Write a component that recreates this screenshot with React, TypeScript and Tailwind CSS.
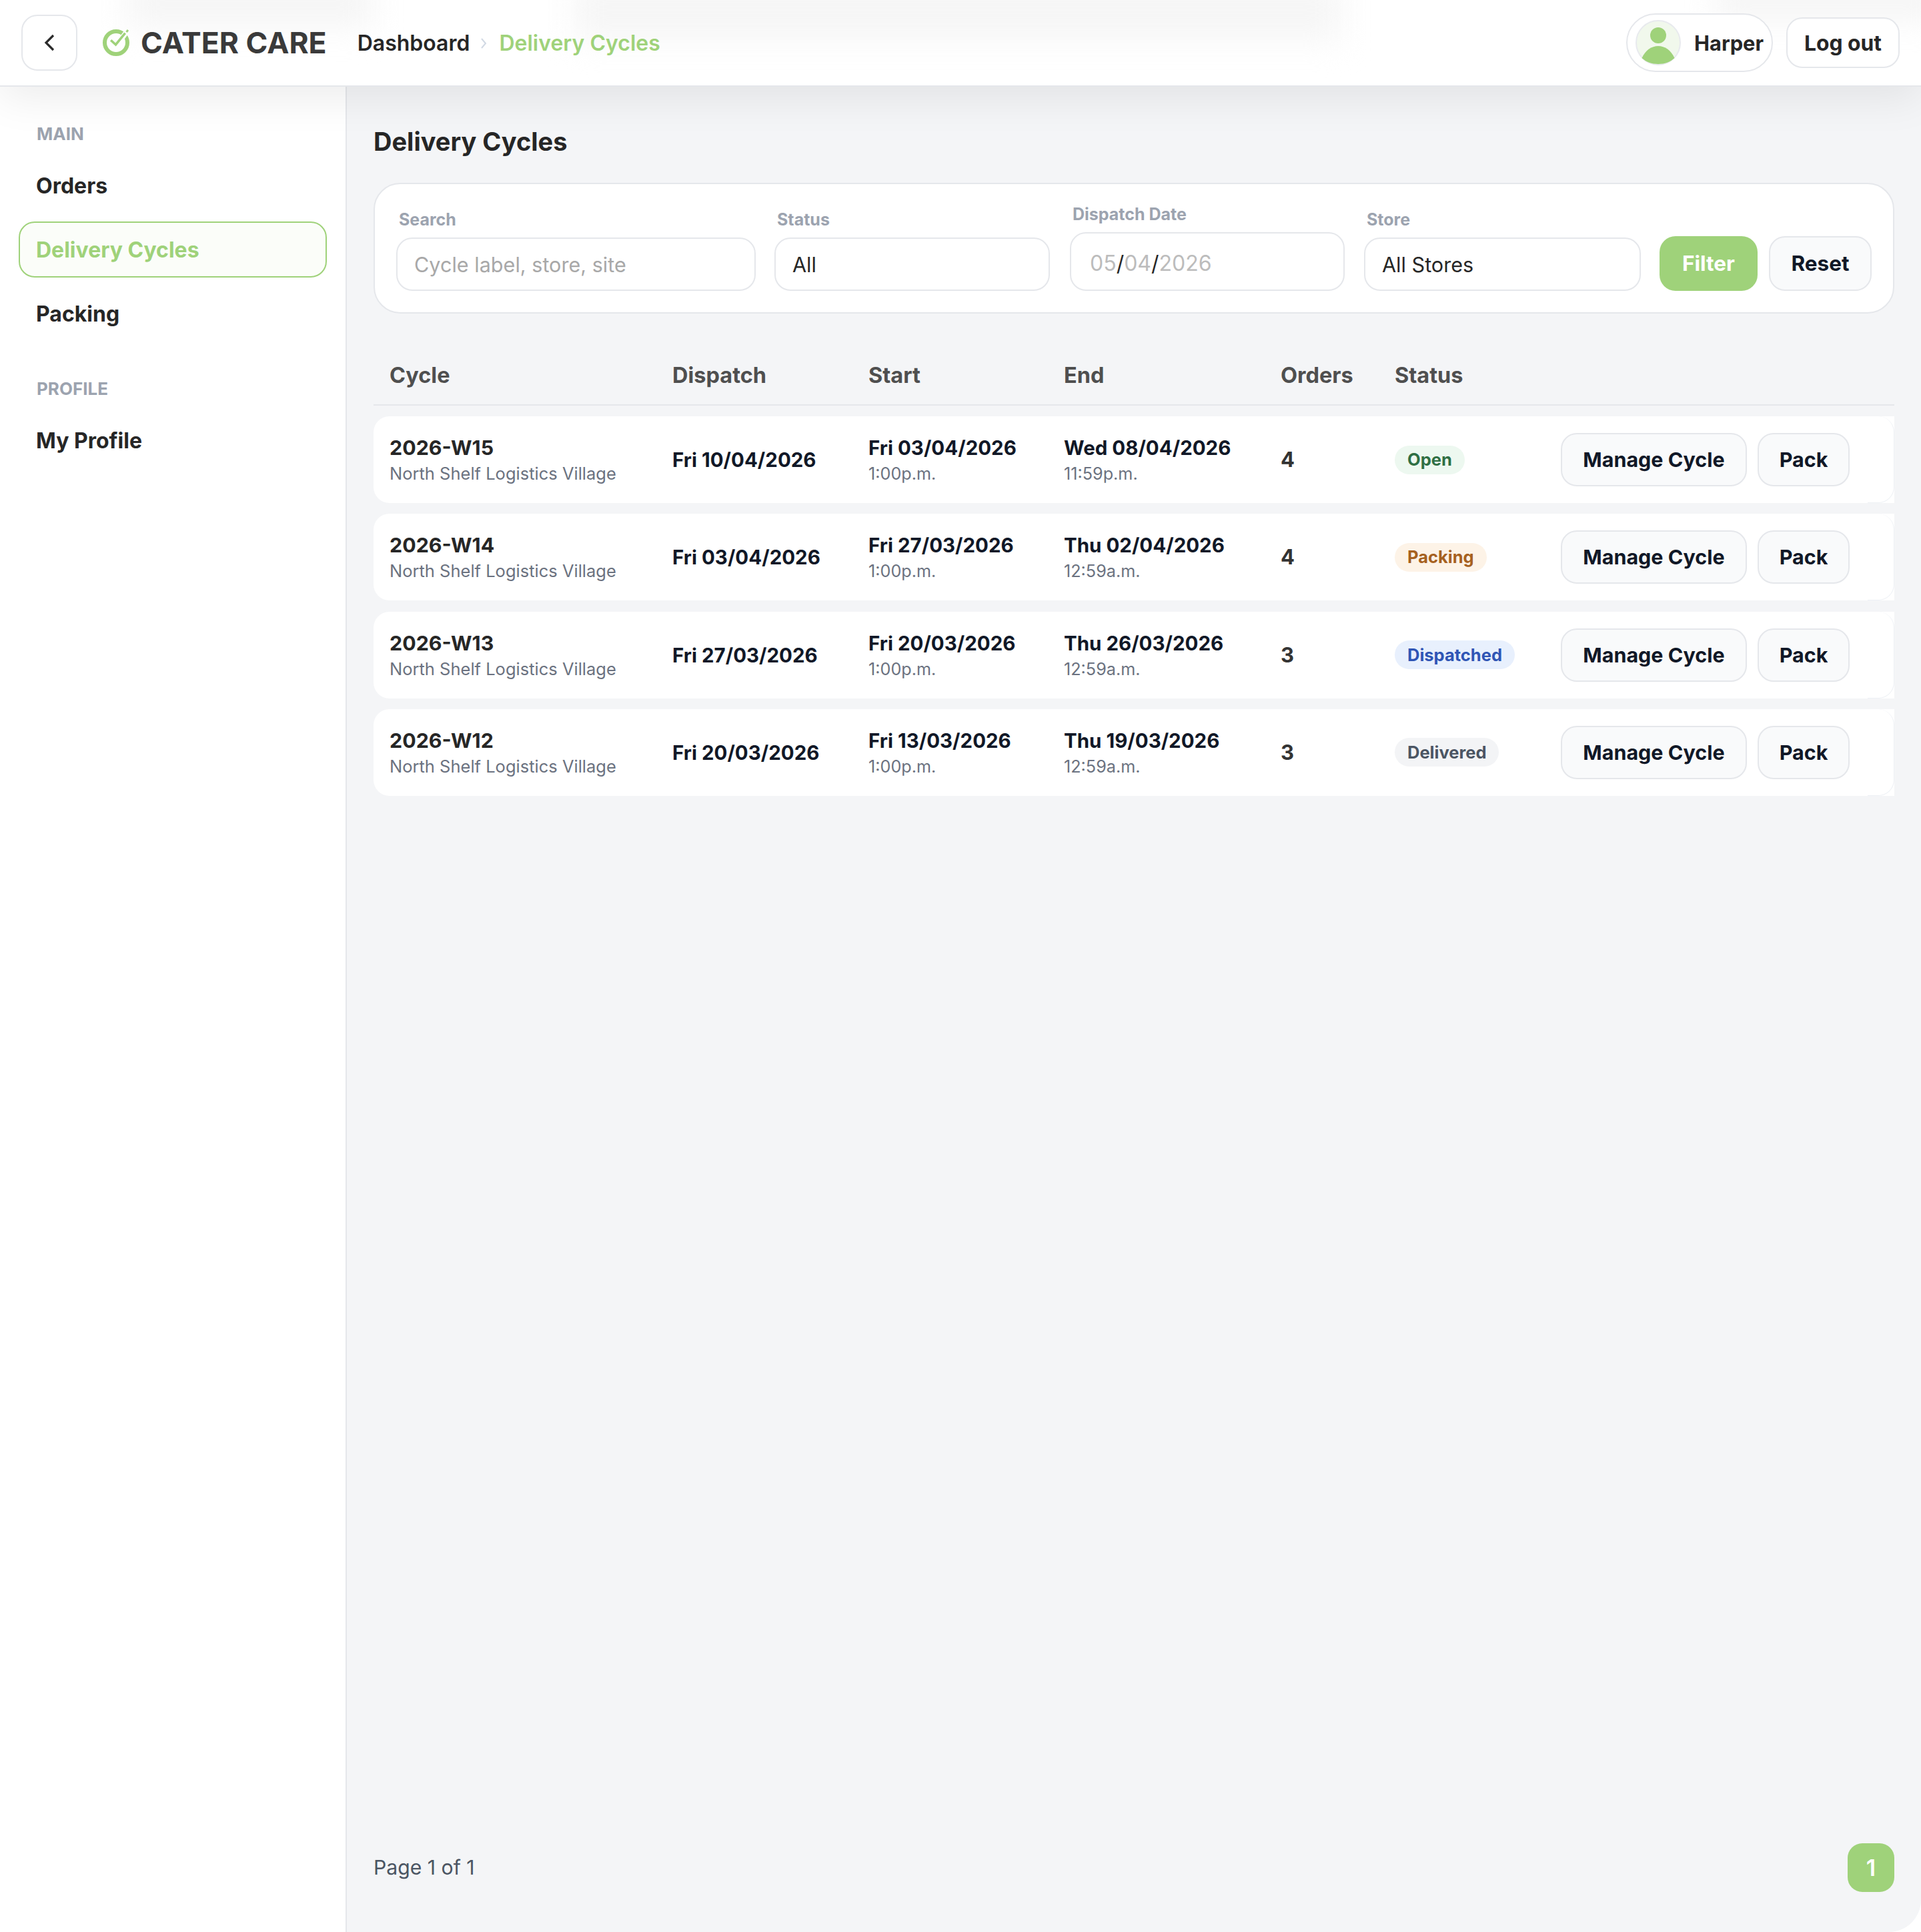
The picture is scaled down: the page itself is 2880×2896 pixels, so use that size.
import React from "react";

const COLS = "grid grid-cols-[424px_294px_293px_325px_171px_249px_1fr] pl-[24px]";

const rows = [
  { id: "2026-W15", dispatch: "Fri 10/04/2026", start: "Fri 03/04/2026", startT: "1:00p.m.", end: "Wed 08/04/2026", endT: "11:59p.m.", orders: "4", status: "Open", badge: "bg-[#edf8f0] text-[#2f6f44]" },
  { id: "2026-W14", dispatch: "Fri 03/04/2026", start: "Fri 27/03/2026", startT: "1:00p.m.", end: "Thu 02/04/2026", endT: "12:59a.m.", orders: "4", status: "Packing", badge: "bg-[#fdf3e7] text-[#a6611f]" },
  { id: "2026-W13", dispatch: "Fri 27/03/2026", start: "Fri 20/03/2026", startT: "1:00p.m.", end: "Thu 26/03/2026", endT: "12:59a.m.", orders: "3", status: "Dispatched", badge: "bg-[#e8f0fd] text-[#2f55b5]" },
  { id: "2026-W12", dispatch: "Fri 20/03/2026", start: "Fri 13/03/2026", startT: "1:00p.m.", end: "Thu 19/03/2026", endT: "12:59a.m.", orders: "3", status: "Delivered", badge: "bg-[#f3f4f6] text-[#4b5563]" },
];

function Logo() {
  return (
    <svg width="48" height="48" viewBox="0 0 48 48" fill="none" className="shrink-0">
      <circle cx="24" cy="24" r="17" stroke="#9fd27a" strokeWidth="6" />
      <path d="M30 21 L41 6" stroke="#ffffff" strokeWidth="8" />
      <path d="M17.5 21.5 L23.5 27 L36.5 11" stroke="#9fd27a" strokeWidth="3.6" strokeLinecap="square" />
      <path d="M39.5 8 L42 5" stroke="#9fd27a" strokeWidth="3" />
    </svg>
  );
}

function Avatar() {
  return (
    <svg width="68" height="68" viewBox="0 0 68 68" className="shrink-0">
      <circle cx="34" cy="34" r="33" fill="#f1f8ec" stroke="#e8eaee" strokeWidth="2" />
      <circle cx="34" cy="23" r="12" fill="#9fd27a" />
      <path d="M9.5 57 C15 45 24 39 34 39 C44 39 53 45 58.5 57 C52 63 44 66 34 66 C24 66 16 63 9.5 57 Z" fill="#9fd27a" />
    </svg>
  );
}

function Field({ label, width, children }: { label: string; width: string; children: React.ReactNode }) {
  return (
    <div className={`flex flex-col ${width}`}>
      <div className="mb-[11px] pl-[4px] text-[25px] font-bold leading-[32px] text-[#9ca3af]">{label}</div>
      {children}
    </div>
  );
}

const inputCls = "h-[80px] flex items-center rounded-[24px] border-2 border-[#e5e7eb] bg-white pl-[25px] pt-[2px] text-[30.6px]";

export default function App() {
  return (
    <div className="relative flex h-[2896px] w-full flex-col bg-white font-[Inter,sans-serif] text-[#262626]">
      <header className="relative z-10 flex h-[130px] shrink-0 items-center justify-between overflow-hidden border-b-2 border-[#e5e7eb] bg-white pl-[32px] pr-[32px] shadow-[0_16px_64px_rgba(0,0,0,0.08)]">
        <div className="absolute left-[190px] top-[-30px] h-[70px] w-[370px] bg-[#f5f5f5] blur-[24px]" />
        <div className="absolute left-[860px] top-[-30px] h-[90px] w-[1150px] bg-[#f6f6f6] blur-[24px]" />
        <div className="absolute left-[2570px] top-[-30px] h-[60px] w-[340px] bg-[#f5f5f5] blur-[24px]" />
        <div className="relative flex items-center">
          <button className="flex h-[84px] w-[84px] items-center justify-center rounded-[24px] border-2 border-[#e5e7eb] bg-white">
            <svg width="18" height="26" viewBox="0 0 18 26" fill="none">
              <path d="M15 2 L4 13 L15 24" stroke="#2b2b2b" strokeWidth="3.2" />
            </svg>
          </button>
          <div className="ml-[34px] flex items-center">
            <Logo />
            <span className="ml-[13px] text-[44.5px] font-bold leading-none text-[#3a3a3a]">CATER CARE</span>
          </div>
          <nav className="ml-[46px] flex items-center pt-[2px] text-[32px] font-semibold">
            <span className="text-[#262626]">Dashboard</span>
            <svg width="12" height="18" viewBox="0 0 12 18" fill="none" className="ml-[15px] mr-[17px]">
              <path d="M3 2 L9 9 L3 16" stroke="#d1d9e4" strokeWidth="2" />
            </svg>
            <span className="text-[#9fd27a]">Delivery Cycles</span>
          </nav>
        </div>
        <div className="relative flex items-center">
          <div className="flex h-[88px] w-[220px] items-center rounded-[44px] border-2 border-[#e5e7eb] bg-white pl-[12px]">
            <Avatar />
            <span className="ml-[20px] pt-[2px] text-[30.8px] font-bold">Harper</span>
          </div>
          <button className="ml-[20px] h-[76px] w-[170px] rounded-[24px] border-2 border-[#e5e7eb] bg-white pt-[2px] text-[31.8px] font-bold">Log out</button>
        </div>
      </header>

      <div className="flex min-h-0 flex-1">
        <aside className="w-[520px] shrink-0 border-r-2 border-[#e5e7eb] bg-white pl-[28px] pr-[28px]">
          <div className="mt-[55px] pl-[27px] text-[26px] font-bold leading-[32px] text-[#9ca3af]">MAIN</div>
          <div className="mt-[19px] flex flex-col gap-[12px]">
            <div className="flex h-[84px] items-center rounded-[24px] pl-[26px] pt-[2px] text-[32px] font-bold">Orders</div>
            <div className="flex h-[84px] items-center rounded-[24px] border-2 border-[#9fd27a] bg-[#fbfdf9] pl-[24px] pt-[2px] text-[32px] font-bold text-[#9fd27a]">Delivery Cycles</div>
            <div className="flex h-[84px] items-center rounded-[24px] pl-[26px] pt-[2px] text-[32px] font-bold">Packing</div>
          </div>
          <div className="mt-[55px] pl-[27px] text-[26px] font-bold leading-[32px] text-[#9ca3af]">PROFILE</div>
          <div className="mt-[19px] flex h-[84px] items-center rounded-[24px] pl-[26px] pt-[2px] text-[32px] font-bold">My Profile</div>
        </aside>

        <main className="flex min-w-0 flex-1 flex-col rounded-br-[48px] bg-[#f4f5f7] pl-[40px] pr-[40px] pb-[60px] pt-[58px]">
          <h1 className="text-[38px] font-bold leading-[48px] text-[#262626]">Delivery Cycles</h1>

          <section className="mt-[38px] flex h-[196px] items-end rounded-[40px] border-2 border-[#e5e7eb] bg-white pb-[32px] pl-[32px]">
            <Field label="Search" width="w-[539px]">
              <div className={`${inputCls} text-[#a8a8a8]`}>Cycle label, store, site</div>
            </Field>
            <div className="w-[28px]" />
            <Field label="Status" width="w-[413px]">
              <div className={`${inputCls} text-[#262626]`}>All</div>
            </Field>
            <div className="w-[30px]" />
            <Field label="Dispatch Date" width="w-[412px]">
              <div className="flex h-[88px] items-center rounded-[24px] border-2 border-[#e5e7eb] bg-white pl-[28px] pt-[5px] text-[32px] text-[#bcbcbc]">
                05<span className="text-[#262626]">/</span>04<span className="text-[#262626]">/</span>2026
              </div>
            </Field>
            <div className="w-[29px]" />
            <Field label="Store" width="w-[415px]">
              <div className={`${inputCls} text-[#262626]`}>All Stores</div>
            </Field>
            <button className="ml-[28px] h-[82px] w-[147px] rounded-[24px] bg-[#9fd27a] text-[31.5px] font-bold text-white">Filter</button>
            <button className="ml-[17px] h-[82px] w-[154px] rounded-[24px] border-2 border-[#e5e7eb] bg-[#f9fafb] text-[31.5px] font-bold text-[#111827]">Reset</button>
          </section>

          <div className={`${COLS} mt-[24px] h-[114px] items-end border-b-2 border-[#e5e7eb] pb-[23px] text-[32.5px] font-bold leading-[40px] text-[#4f4f4f]`}>
            <div>Cycle</div>
            <div>Dispatch</div>
            <div>Start</div>
            <div>End</div>
            <div>Orders</div>
            <div>Status</div>
            <div />
          </div>

          <div className="mt-[16px] flex flex-col gap-[16.33px]">
            {rows.map((r) => (
              <div key={r.id} className={`${COLS} relative h-[130px] items-center rounded-l-[24px] bg-white`}>
                <div className="absolute right-0 top-0 h-full w-[40px] rounded-r-[24px] border-b border-r border-[#eef1f5]" />
                <div>
                  <div className="mb-[2px] text-[30.4px] font-bold leading-[40px] text-[#262626]">{r.id}</div>
                  <div className="text-[25.5px] leading-[34px] text-[#6b7280]">North Shelf Logistics Village</div>
                </div>
                <div className="text-[29.5px] font-bold leading-[40px] text-[#111827]">{r.dispatch}</div>
                <div>
                  <div className="mb-[2px] text-[29.5px] font-bold leading-[40px] text-[#111827]">{r.start}</div>
                  <div className="text-[25.2px] leading-[34px] text-[#6b7280]">{r.startT}</div>
                </div>
                <div>
                  <div className="mb-[2px] text-[29.5px] font-bold leading-[40px] text-[#111827]">{r.end}</div>
                  <div className="text-[25.2px] leading-[34px] text-[#6b7280]">{r.endT}</div>
                </div>
                <div className="text-[31px] font-bold leading-[40px] text-[#333333]">{r.orders}</div>
                <div>
                  <span className={`inline-flex h-[43px] items-center rounded-full px-[19px] text-[25.5px] font-bold ${r.badge}`}>{r.status}</span>
                </div>
                <div className="relative flex h-full items-center gap-[16px]">
                  <button className="h-[80px] w-[279px] rounded-[24px] border-2 border-[#e5e7eb] bg-[#f9fafb] text-[30.5px] font-bold text-[#111827]">Manage Cycle</button>
                  <button className="h-[80px] w-[138px] rounded-[24px] border-2 border-[#e5e7eb] bg-[#f9fafb] text-[30.5px] font-bold text-[#111827]">Pack</button>
                </div>
              </div>
            ))}
          </div>

          <div className="mt-auto flex items-center justify-between">
            <span className="pt-[1px] text-[30.2px] text-[#4b5563]">Page 1 of 1</span>
            <span className="flex h-[73px] w-[70px] items-center justify-center rounded-[22px] bg-[#9fd27a] text-[34px] font-semibold text-white">1</span>
          </div>
        </main>
      </div>
    </div>
  );
}
